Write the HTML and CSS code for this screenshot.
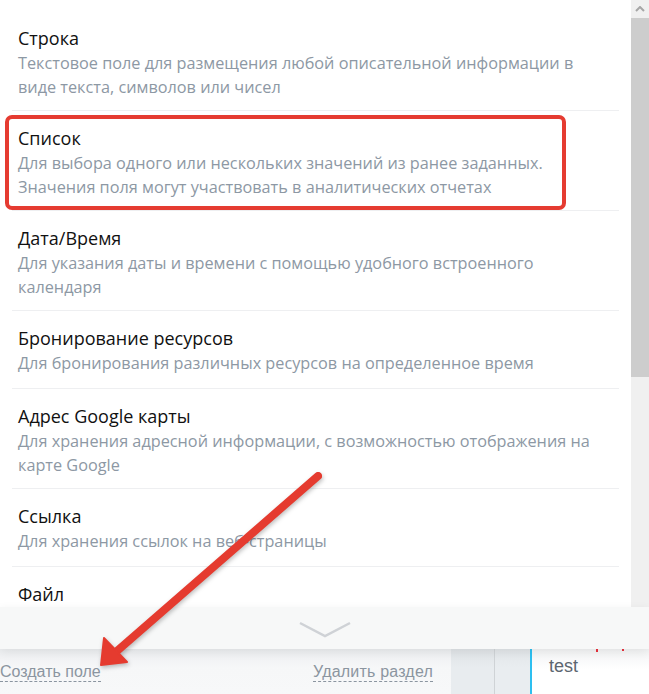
FILE: index.html
```html
<!DOCTYPE html>
<html lang="ru">
<head>
<meta charset="utf-8">
<title>Поля</title>
<link rel="stylesheet" href="styles.css">
</head>
<body>
<div class="page">
  <div class="list-wrap">
    <div class="list">
      <div class="item">
        <div class="item-title">Строка</div>
        <div class="item-desc">Текстовое поле для размещения любой описательной информации в виде текста, символов или чисел</div>
      </div>
      <div class="item item-marked">
        <div class="item-title">Список</div>
        <div class="item-desc">Для выбора одного или нескольких значений из ранее заданных. Значения поля могут участвовать в аналитических отчетах</div>
      </div>
      <div class="item">
        <div class="item-title">Дата/Время</div>
        <div class="item-desc">Для указания даты и времени с помощью удобного встроенного календаря</div>
      </div>
      <div class="item">
        <div class="item-title">Бронирование ресурсов</div>
        <div class="item-desc">Для бронирования различных ресурсов на определенное время</div>
      </div>
      <div class="item">
        <div class="item-title">Адрес Google карты</div>
        <div class="item-desc">Для хранения адресной информации, с возможностью отображения на карте Google</div>
      </div>
      <div class="item">
        <div class="item-title">Ссылка</div>
        <div class="item-desc">Для хранения ссылок на веб-страницы</div>
      </div>
      <div class="item">
        <div class="item-title">Файл</div>
      </div>
    </div>
    <div class="scrollbar">
      <div class="sb-button">
        <svg width="10" height="6" viewBox="0 0 10 6"><polyline points="1,5 5,1 9,5" fill="none" stroke="#a6a6a6" stroke-width="2"/></svg>
      </div>
      <div class="sb-thumb"></div>
    </div>
  </div>
  <div class="more-bar">
    <svg class="chevron" width="56" height="18" viewBox="0 0 56 18"><polyline points="3,3 28,16 53,3" fill="none" stroke="#cfd2d6" stroke-width="2.5"/></svg>
  </div>
  <div class="footer">
    <div class="footer-actions">
      <span class="dashed-link">Создать поле</span>
      <span class="dashed-link link-wide">Удалить раздел</span>
    </div>
    <div class="col col-a"></div>
    <div class="col col-b"></div>
    <div class="card">
      <span class="card-text">test</span>
      <span class="red-bit bit-1"></span>
      <span class="red-bit bit-2"></span>
    </div>
  </div>
  <svg class="arrow" width="649" height="694" viewBox="0 0 649 694">
    <line x1="318" y1="476" x2="117" y2="651" stroke="#e53b2f" stroke-width="8" stroke-linecap="round"/>
    <polygon points="104,638 101,665 127,662" fill="#e53b2f" stroke="#e53b2f" stroke-width="2" stroke-linejoin="round"/>
  </svg>
</div>
</body>
</html>
```
FILE: styles.css
```css
html, body {
  margin: 0;
  padding: 0;
  background: #ffffff;
}
body {
  width: 649px;
  height: 694px;
  overflow: hidden;
}
.page {
  position: relative;
  width: 649px;
  height: 694px;
  display: flex;
  flex-direction: column;
  font-family: "Open Sans", "Noto Sans", sans-serif;
}
.list-wrap {
  height: 607px;
  display: flex;
  overflow: hidden;
}
.list {
  width: 631px;
  box-sizing: border-box;
  padding: 11px 12px 0;
  overflow: hidden;
}
.item {
  position: relative;
  box-sizing: border-box;
  min-height: 78px;
  padding: 14px 19px 11px 6px;
  border-bottom: 1px solid #eeeff1;
}
.item-title {
  font-size: 18px;
  line-height: 26px;
  color: #111111;
}
.item-desc {
  font-size: 16.25px;
  line-height: 24px;
  color: #8d98a4;
}
.item-marked::after {
  content: "";
  position: absolute;
  left: -7px;
  top: 4px;
  width: 561px;
  height: 95px;
  box-sizing: border-box;
  border: 4px solid #e53b31;
  border-radius: 7px;
}
.scrollbar {
  width: 18px;
  background: #f0f0f0;
  display: flex;
  flex-direction: column;
}
.sb-button {
  height: 18px;
  display: flex;
  align-items: center;
  justify-content: center;
}
.sb-thumb {
  height: 359px;
  background: #cdcdcd;
}
.more-bar {
  position: relative;
  z-index: 2;
  height: 42px;
  background: #f7f8f8;
  display: flex;
  align-items: center;
  justify-content: center;
  box-shadow: 0 3px 10px rgba(0, 0, 0, 0.07);
}
.chevron {
  margin-top: 2px;
}
.footer {
  flex: 1;
  display: flex;
  font-family: "Liberation Sans", Arial, sans-serif;
}
.footer-actions {
  width: 451px;
  box-sizing: border-box;
  padding: 13px 18px 0 0;
  display: flex;
  justify-content: space-between;
  align-items: flex-start;
  background: linear-gradient(#eceef0, #f6f7f8 40%, #f7f8f9);
}
.dashed-link {
  font-size: 16px;
  line-height: 19px;
  color: #8b95a0;
  border-bottom: 1px dashed #8b95a0;
}
.link-wide {
  letter-spacing: 0.2px;
}
.col-a {
  width: 43px;
  background: linear-gradient(#dfe3e6, #e8ecef 40%);
  border-right: 1px solid #cfd3d6;
}
.col-b {
  width: 35px;
  background: linear-gradient(#e1e5e8, #e9edf0 40%);
}
.card {
  position: relative;
  flex: 1;
  border-left: 2px solid #2dbff0;
  padding: 5px 0 0 17px;
  background: linear-gradient(#f2f3f4, #ffffff 45%);
}
.card-text {
  font-size: 18px;
  line-height: 24px;
  color: #5d6670;
}
.red-bit {
  position: absolute;
  top: 0;
  width: 2px;
  height: 3px;
  background: #e8313c;
}
.bit-1 {
  left: 64px;
}
.bit-2 {
  left: 90px;
  height: 2px;
}
.arrow {
  position: absolute;
  left: 0;
  top: 0;
  z-index: 5;
  pointer-events: none;
  filter: drop-shadow(1px 2px 2px rgba(0, 0, 0, 0.25));
}
```
